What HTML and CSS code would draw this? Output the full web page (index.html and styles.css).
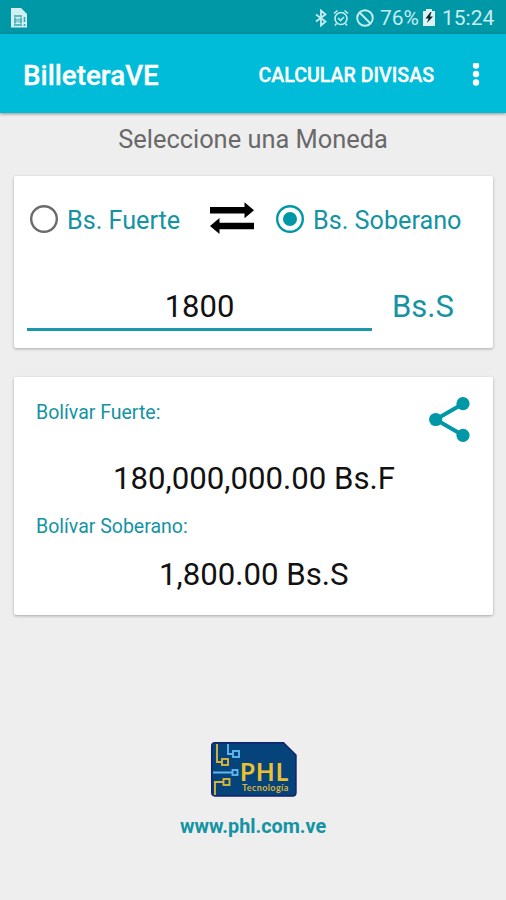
FILE: index.html
```html
<!DOCTYPE html>
<html lang="es">
<head>
    <meta charset="UTF-8">
    <meta name="viewport" content="width=device-width, initial-scale=1.0">
    <title>BilleteraVE</title>
    <link rel="stylesheet" href="styles.css">
</head>
<body>
    <div class="status-bar">
        <svg class="sim" width="17" height="20" viewBox="0 0 17 20">
            <path d="M0 0h10l6 6v13.500H0z" fill="#d2eff2"/>
            <path d="M3 8h8M3 17h8M4 9.500v6M10 9.500v6M13.500 9v5M13.500 16v2" fill="none" stroke="#3aa5b1" stroke-width="1.600"/>
            <path d="M5 10.500h4v4H5z" fill="#84c8d0"/>
        </svg>
        <div class="status-icons">
            <svg class="bluetooth" width="12" height="18" viewBox="0 0 12 18">
                <path d="M1 5.500l9.500 7L6 16.500v-15l4.500 4L1 12.500" fill="none" stroke="#c6edf1" stroke-width="1.800"/>
            </svg>
            <svg class="alarm" width="16" height="18" viewBox="0 0 16 18">
                <g fill="none" stroke="#c6edf1" stroke-width="1.600">
                    <circle cx="8" cy="9.500" r="6"/>
                    <path d="M5 9l2.500 2.500L11 8M1 4.500L4.500 1.500M11.500 1.500L15 4.500M3.500 14.500L2 16.500M12.500 14.500l1.500 2"/>
                </g>
            </svg>
            <svg class="blocked" width="18" height="18" viewBox="0 0 18 18">
                <g fill="none" stroke="#c6edf1" stroke-width="1.900">
                    <circle cx="9" cy="9" r="7.800"/>
                    <path d="M3.500 3.500l11 11"/>
                </g>
            </svg>
            <span class="percent">76%</span>
            <svg class="battery" width="12" height="17" viewBox="0 0 12 17">
                <path d="M0 2h3V0h6v2h3v15H0z" fill="#dcf3f5"/>
                <path d="M7.500 3L2.500 9.500h3L4 14l6-6.500H7L8.500 3z" fill="#10282b"/>
            </svg>
            <span class="clock">15:24</span>
        </div>
    </div>
    <header class="app-bar">
        <h1 class="title">BilleteraVE</h1>
        <span class="action">CALCULAR DIVISAS</span>
        <svg class="more" width="8" height="24" viewBox="0 0 8 24">
            <g fill="#fff">
                <circle cx="4" cy="2.500" r="3.200"/>
                <circle cx="4" cy="11" r="3.200"/>
                <circle cx="4" cy="19.500" r="3.200"/>
            </g>
        </svg>
    </header>
    <main>
        <h2 class="heading">Seleccione una Moneda</h2>
        <section class="card converter">
            <div class="options">
                <svg class="radio" width="28" height="28" viewBox="0 0 28 28">
                    <circle cx="14" cy="14" r="12.800" fill="none" stroke="#6b6b6b" stroke-width="2.400"/>
                </svg>
                <span class="option fuerte">Bs. Fuerte</span>
                <svg class="swap" width="44" height="33" viewBox="0 0 44 33">
                    <path d="M0 5h34.500V.3L44 8.300l-9.500 8v-4.800H0zM44 20.800H9.500V16L0 24l9.500 8v-4.700H44z"/>
                </svg>
                <svg class="radio" width="28" height="28" viewBox="0 0 28 28">
                    <circle cx="14" cy="14" r="12.800" fill="none" stroke="#0097a7" stroke-width="2.400"/>
                    <circle cx="14" cy="14" r="7" fill="#0097a7"/>
                </svg>
                <span class="option soberano">Bs. Soberano</span>
            </div>
            <div class="amount">
                <div class="amount-field">1800</div>
                <span class="unit">Bs.S</span>
            </div>
        </section>
        <section class="card results">
            <svg class="share" width="41" height="45" viewBox="0 0 41 45">
                <path d="M34 6.700L6.700 22.500 34 38.300" fill="none" stroke="#0097a7" stroke-width="4"/>
                <g fill="#0097a7">
                    <circle cx="34" cy="6.700" r="6.600"/>
                    <circle cx="6.700" cy="22.500" r="6.600"/>
                    <circle cx="34" cy="38.300" r="6.600"/>
                </g>
            </svg>
            <div class="label label-fuerte">Bolívar Fuerte:</div>
            <div class="value value-fuerte">180,000,000.00 Bs.F</div>
            <div class="label label-soberano">Bolívar Soberano:</div>
            <div class="value value-soberano">1,800.00 Bs.S</div>
        </section>
    </main>
    <footer>
        <div class="logo">
            <svg width="86" height="55" viewBox="0 0 86 55">
                <path d="M4 .7h68.500L85 13v37.500q0 3.500-3.500 3.500H4Q.7 54 .7 50.500V4Q.7.7 4 .7z" fill="#05437b" stroke="#14206b" stroke-width="1.400"/>
                <g fill="none" stroke="#d9b23c" stroke-width="1.900">
                    <path d="M6 2v18h5M4 53V40h8"/>
                    <rect x="11" y="17" width="6" height="6"/>
                    <rect x="12.500" y="37" width="6" height="6"/>
                </g>
                <g fill="none" stroke="#62b5ee" stroke-width="1.900">
                    <path d="M17 2v10h5M2 30.500h19"/>
                    <rect x="22" y="9" width="6" height="6"/>
                    <rect x="21.500" y="28" width="5" height="5"/>
                </g>
            </svg>
            <div class="logo-text">
                <span class="logo-name">PHL</span>
                <span class="logo-sub">Tecnología</span>
            </div>
        </div>
        <a class="site">www.phl.com.ve</a>
    </footer>
</body>
</html>
```
FILE: styles.css
```css
* {
    box-sizing: border-box;
}
body {
    margin: 0;
    height: 900px;
    overflow: hidden;
    background-color: #eee;
    font-family: Roboto, sans-serif;
    color: #111;
    white-space: nowrap;
    display: flex;
    flex-direction: column;
}
svg {
    display: block;
    flex: none;
}
.status-bar {
    height: 34px;
    background-color: #0097a7;
    display: flex;
    justify-content: space-between;
    align-items: center;
    padding: 1px 11px 0;
    color: #c6edf1;
}
.status-icons {
    display: flex;
    align-items: center;
    font-size: 21px;
}
.alarm {
    margin-left: 6px;
}
.blocked {
    margin-left: 7px;
}
.percent {
    margin-left: 6px;
    width: 40px;
}
.battery {
    margin-left: 3px;
}
.clock {
    margin-left: 7px;
    width: 53px;
}
.app-bar {
    height: 79px;
    flex: none;
    background-color: #00bcd9;
    box-shadow: 0 1px 3px rgba(0, 0, 0, 0.4);
    display: flex;
    align-items: center;
    padding: 3px 26px 0 23px;
    color: #fff;
}
.title {
    margin: 0;
    font-size: 27.8px;
    font-weight: 500;
    -webkit-text-stroke: 0.3px #fff;
}
.action {
    margin-left: auto;
    font-size: 19.6px;
    font-weight: 500;
    -webkit-text-stroke: 0.3px #fff;
}
.more {
    margin-left: 38px;
}
.heading {
    margin: 0;
    height: 63px;
    padding-top: 10px;
    line-height: 32px;
    text-align: center;
    font-size: 25.4px;
    font-weight: 400;
    color: #696969;
}
.card {
    margin: 0 13px 0 14px;
    background-color: #fff;
    border-radius: 2px;
    box-shadow: 0 1px 3px rgba(0, 0, 0, 0.3);
}
.converter {
    height: 172px;
}
.options {
    display: flex;
    align-items: center;
    padding: 26px 0 0 16px;
    height: 59px;
    font-size: 25.2px;
    color: #1393a3;
}
.option {
    margin-left: 9px;
    padding-top: 3px;
}
.fuerte {
    width: 114px;
}
.swap {
    margin: 0 22px 0 29px;
}
.amount {
    display: flex;
    margin: 46px 0 0 13px;
    font-size: 31px;
    line-height: 52px;
}
.amount-field {
    width: 345px;
    height: 50px;
    border-bottom: 3px solid #1898a8;
    text-align: center;
}
.unit {
    margin-left: 20px;
    color: #1393a3;
}
.results {
    position: relative;
    margin-top: 29px;
    height: 238px;
    padding-top: 23px;
}
.share {
    position: absolute;
    top: 20px;
    right: 23px;
}
.label {
    padding-left: 22px;
    font-size: 19.5px;
    line-height: 26px;
    color: #1393a3;
}
.value {
    font-size: 31.2px;
    line-height: 40px;
}
.value-fuerte {
    margin: 33px 0 15px 99px;
}
.value-soberano {
    margin: 15px 0 0 145px;
}
footer {
    display: flex;
    flex-direction: column;
    align-items: center;
    padding-top: 127px;
}
.logo {
    position: relative;
    left: 1px;
}
.logo-text {
    position: absolute;
    left: 29px;
    top: 20px;
    display: flex;
    flex-direction: column;
}
.logo-name {
    font: 700 24px/20px Lato, sans-serif;
    letter-spacing: 1.2px;
    color: #ecc02e;
}
.logo-sub {
    padding-left: 2px;
    font: 700 9px/10px Lato, sans-serif;
    letter-spacing: 0.4px;
    margin-top: 1px;
    color: #d9b23c;
}
.site {
    margin-top: 16px;
    font-size: 19.8px;
    font-weight: 700;
    line-height: 28px;
    color: #1393a3;
}
```
